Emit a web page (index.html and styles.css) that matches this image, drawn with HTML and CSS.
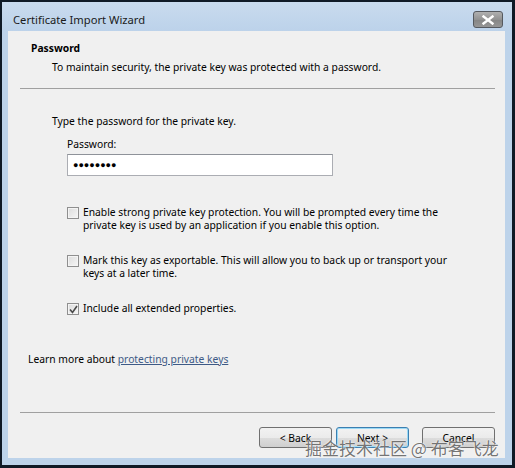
FILE: index.html
```html
<!DOCTYPE html>
<html>
<head>
<meta charset="utf-8">
<link rel="stylesheet" href="styles.css">
</head>
<body>
<div class="window">
  <div class="titlebar">
    <div class="title">Certificate Import Wizard</div>
    <div class="close">
      <svg width="14" height="10" viewBox="0 0 14 10"><path d="M2.5 1.5 L11.5 8.5 M11.5 1.5 L2.5 8.5" stroke="#fff" stroke-width="2.4" stroke-linecap="square"/></svg>
    </div>
  </div>
  <div class="content">
    <div class="header">
      <div class="h-title">Password</div>
      <div class="h-sub">To maintain security, the private key was protected with a password.</div>
    </div>
    <div class="sep"></div>
    <div class="body">
      <div class="intro">Type the password for the private key.</div>
      <div class="field-label">Password:</div>
      <div class="input">●●●●●●●●</div>
      <div class="opt opt-first">
        <span class="cb"></span>
        <span class="opt-text">Enable strong private key protection. You will be prompted every time the<br>private key is used by an application if you enable this option.</span>
      </div>
      <div class="opt">
        <span class="cb"></span>
        <span class="opt-text">Mark this key as exportable. This will allow you to back up or transport your<br>keys at a later time.</span>
      </div>
      <div class="opt">
        <span class="cb checked"><svg width="9" height="9" viewBox="0 0 9 9"><path d="M1 4.5 L3.5 7.5 L8 1" fill="none" stroke="#4a4a4a" stroke-width="1.6"/></svg></span>
        <span class="opt-text">Include all extended properties.</span>
      </div>
      <div class="learn">Learn more about <a href="#">protecting private keys</a></div>
    </div>
    <div class="sep"></div>
    <div class="footer">
      <button class="btn">&lt; Back</button>
      <button class="btn btn-default">Next &gt;</button>
      <button class="btn btn-cancel">Cancel</button>
    </div>
  </div>
  <div class="watermark">掘金技术社区 @ 布客飞龙</div>
</div>
</body>
</html>
```

FILE: styles.css
```css
html, body {
  margin: 0;
  padding: 0;
  background: #0e1622;
}
.window {
  position: relative;
  width: 515px;
  height: 468px;
  box-sizing: border-box;
  border-style: solid;
  border-color: #101a26;
  border-width: 2px 3px 3px 2px;
  background: #bdd3ea;
  display: flex;
  flex-direction: column;
  font-family: "Noto Sans", "Open Sans", sans-serif;
  font-size: 10.3px;
  line-height: 13px;
  color: #000;
}
.titlebar {
  height: 29px;
  display: flex;
  justify-content: space-between;
  padding: 0 9px 0 11px;
  background: linear-gradient(#c9dbee, #bcd2ea);
}
.title {
  margin-top: 11px;
  font-size: 11.2px;
  color: #1a1a1a;
}
.close {
  margin-top: 9px;
  width: 30px;
  height: 17px;
  box-sizing: border-box;
  border: 1px solid #55595f;
  border-radius: 3px;
  background: linear-gradient(#b0b0b0, #929292 50%, #848484 51%, #969696);
  display: flex;
  align-items: center;
  justify-content: center;
}
.content {
  flex: 1;
  margin: 0 7px 7px 6px;
  background: #f0f0f0;
  display: flex;
  flex-direction: column;
}
.header {
  height: 57px;
  box-sizing: border-box;
  padding: 11px 0 0 23px;
}
.h-title {
  font-weight: bold;
}
.h-sub {
  margin: 6px 0 0 21px;
}
.sep {
  height: 1px;
  background: #a0a0a0;
  margin: 0 10px 0 12px;
  flex: none;
}
.body {
  flex: 1;
  padding: 26px 0 0 44px;
}
.field-label {
  margin: 10px 0 0 15px;
}
.input {
  margin: 3px 0 0 15px;
  width: 266px;
  height: 22px;
  box-sizing: border-box;
  border: 1px solid #abadb3;
  border-top-color: #8e9299;
  background: #fff;
  font-size: 9px;
  line-height: 20px;
  padding-left: 5px;
}
.opt {
  display: flex;
  align-items: flex-start;
  margin: 22px 0 0 15px;
}
.opt-first {
  margin-top: 30px;
}
.cb {
  flex: none;
  width: 12px;
  height: 12px;
  box-sizing: border-box;
  border: 1px solid #8f8f8f;
  background: linear-gradient(135deg, #dcdcdc, #f6f6f6);
  box-shadow: inset 0 0 0 1px #f4f4f4;
  margin: 1px 4px 0 0;
  display: flex;
  align-items: center;
  justify-content: center;
}
.learn {
  margin: 38px 0 0 -24px;
}
.learn a {
  color: #3e5a86;
  text-decoration: underline;
}
.footer {
  height: 45px;
  display: flex;
  justify-content: flex-end;
  align-items: flex-start;
  padding: 14px 10px 0 0;
  box-sizing: border-box;
}
.btn {
  width: 73px;
  height: 21px;
  margin-left: 4px;
  border: 1px solid #707070;
  border-radius: 3px;
  background: linear-gradient(#f2f2f2, #ebebeb 50%, #dddddd 51%, #cfcfcf);
  font-family: inherit;
  font-size: 10.3px;
  color: #000;
  padding: 0;
}
.btn-default {
  border-color: #3c7fb1;
  box-shadow: inset 0 0 0 1px #9ad9f5;
}
.btn-cancel {
  margin-left: 13px;
}
.watermark {
  position: absolute;
  left: 303px;
  top: 435px;
  font-family: "Noto Sans CJK SC", sans-serif;
  font-size: 17px;
  line-height: 22px;
  color: rgba(70, 70, 70, 0.75);
  text-shadow: 0 0 2px #fff, 0 0 1px #fff;
  white-space: nowrap;
}
```
